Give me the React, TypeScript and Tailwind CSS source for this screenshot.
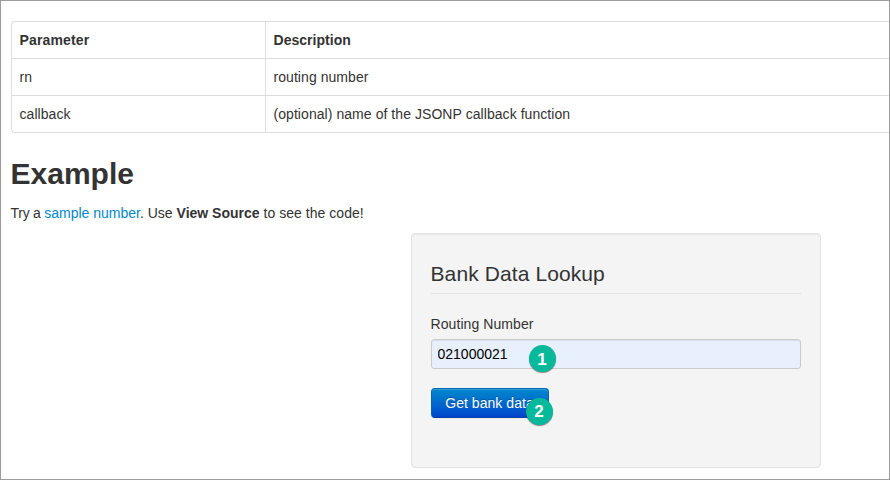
import type { ReactNode } from "react";

const rows = [
  ["rn", "routing number"],
  ["callback", "(optional) name of the JSONP callback function"],
];

function Marker({ children, className }: { children: ReactNode; className: string }) {
  return (
    <span
      className={`absolute flex size-[27px] items-center justify-center rounded-full bg-[#06b99b] pt-px text-[17px] leading-none font-bold text-white shadow-[0_1px_1px_rgba(0,0,0,0.45)] ${className}`}
    >
      {children}
    </span>
  );
}

export default function App() {
  return (
    <div className="h-[480px] w-[890px] overflow-hidden border border-[#9b9b9b] bg-white pt-5 pl-2.5 font-['Helvetica_Neue','Liberation_Sans',sans-serif] text-[14px] leading-5 text-[#333]">
      <table className="w-[900px] table-fixed border-separate border-spacing-0 rounded-[4px] border border-l-0 border-[#ddd] text-left">
        <thead>
          <tr>
            <th className="h-9 w-[254px] rounded-tl-[4px] border-l border-[#ddd] px-[7.5px] py-0 font-bold">
              <span className="tracking-[0.16px]">Parameter</span>
            </th>
            <th className="border-l border-[#ddd] px-[7.5px] py-0 font-bold">
              <span className="tracking-[0.03px]">Description</span>
            </th>
          </tr>
        </thead>
        <tbody>
          {rows.map(([name, description], i) => (
            <tr key={name} className="tracking-[0.06px]">
              <td className={`h-[37px] border-t border-l border-[#ddd] px-[7.5px] py-0 ${i === 1 ? "rounded-bl-[4px]" : ""}`}>{name}</td>
              <td className="border-t border-l border-[#ddd] px-[7.5px] py-0">{description}</td>
            </tr>
          ))}
        </tbody>
      </table>

      <h1 className="-ml-[0.5px] mt-[21px] text-[30px] leading-10 font-bold">Example</h1>
      <p className="-ml-[0.5px] mt-[9px]">
        <span className="tracking-[-0.25px]">Try a </span>
        <a className="text-[#08c]">sample number</a>. Use <strong className="font-bold">View Source</strong>{" "}
        <span className="tracking-[0.04px]">to see the code!</span>
      </p>

      <section className="mt-2.5 ml-[400px] h-[235px] w-[410px] rounded-[4px] border border-[#e3e3e3] bg-[#f4f4f4] px-[19px] pt-[19px] shadow-[inset_0_1px_1px_rgba(0,0,0,0.05)]">
        <h2 className="h-[41px] border-b border-[#e3e3e3] pt-px text-[21px] leading-10 tracking-[0.1px]">
          <span className="-ml-[0.5px]">Bank Data Lookup</span>
        </h2>
        <label htmlFor="routing" className="mt-5 -ml-[0.5px] block tracking-[0.08px]">
          Routing Number
        </label>
        <div className="relative mt-[5px]">
          <input
            id="routing"
            defaultValue="021000021"
            className="block h-[30px] w-full rounded-[3px] border border-[#ccc] bg-[#e8f0fe] px-[5.5px] text-black shadow-[inset_0_1px_1px_rgba(0,0,0,0.075)] outline-none"
          />
          <Marker className="top-[6px] left-[97.5px]">1</Marker>
        </div>
        <div className="relative mt-[19px] w-[118px]">
          <button className="block h-[30px] w-full rounded-[4px] border border-[#0066bb] border-b-[#003fa5] bg-linear-to-b from-[#0088cc] to-[#0044cc] pr-px tracking-[0.05px] whitespace-nowrap text-white shadow-[inset_0_1px_0_rgba(255,255,255,0.2),0_1px_2px_rgba(0,0,0,0.05)] [text-shadow:0_-1px_0_rgba(0,0,0,0.25)]">
            Get bank data
          </button>
          <Marker className="top-[9.5px] left-[94.5px]">2</Marker>
        </div>
      </section>
    </div>
  );
}
